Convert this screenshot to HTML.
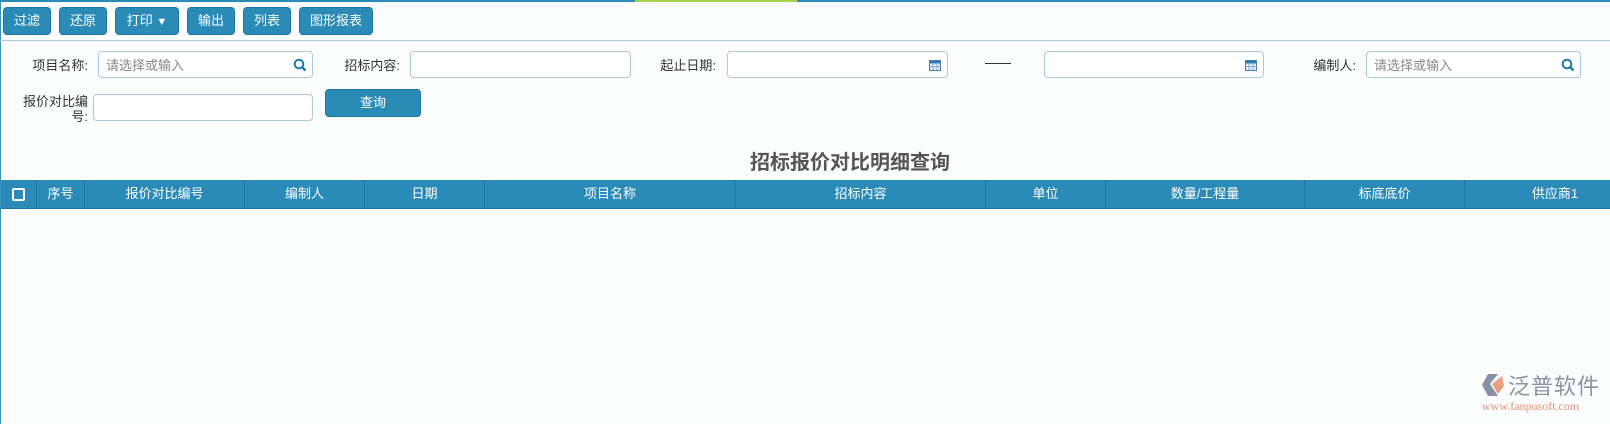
<!DOCTYPE html>
<html><head><meta charset="utf-8"><style>
*{box-sizing:border-box;margin:0;padding:0}
body{width:1610px;height:424px;background:#fbfdfd;font-family:"Liberation Sans","Noto Sans CJK SC",sans-serif;font-size:13px;color:#333;position:relative;overflow:hidden}
.a{position:absolute}
.btn{position:absolute;top:7px;height:28px;background:#2b8bb7;color:#fff;border-radius:4px;font-size:13px;text-align:center;line-height:26px;border:1px solid #1f75a0}
.lbl{position:absolute;font-size:13px;color:#333;text-align:right}
.inp{position:absolute;height:27px;border:1px solid #a8c8e4;border-radius:4px;background:#fff}
.ph{position:absolute;left:7px;top:3px;color:#888;font-size:13px}
.th{position:absolute;top:0;height:28px;line-height:27px;color:#fff;font-size:13px;text-align:center;border-right:1px solid #1f76a3}
</style></head><body>
<div class="a" style="left:0;top:0;width:1610px;height:2px;background:#2a8ab8"></div>
<div class="a" style="left:635px;top:0;width:162px;height:2px;background:#a8d34a"></div>
<div class="a" style="left:0;top:0;width:1px;height:424px;background:#3b92bf"></div>
<div class="btn" style="left:3px;width:48px">过滤</div>
<div class="btn" style="left:59px;width:48px">还原</div>
<div class="btn" style="left:115px;width:64px">打印 <span style="font-size:11px">▼</span></div>
<div class="btn" style="left:187px;width:48px">输出</div>
<div class="btn" style="left:243px;width:48px">列表</div>
<div class="btn" style="left:299px;width:74px">图形报表</div>
<div class="a" style="left:0;top:40px;width:1610px;height:1px;background:#a9cce3"></div>

<div class="lbl" style="left:18px;top:55px;width:70px">项目名称:</div>
<div class="inp" style="left:98px;top:51px;width:215px"><span class="ph">请选择或输入</span>
<svg class="a" style="right:5px;top:6px" width="14" height="14" viewBox="0 0 14 14"><circle cx="6" cy="6" r="4.3" fill="none" stroke="#1d7ab0" stroke-width="2"/><line x1="9" y1="9" x2="12.5" y2="12.5" stroke="#1d7ab0" stroke-width="2.4"/></svg></div>
<div class="lbl" style="left:328px;top:55px;width:72px">招标内容:</div>
<div class="inp" style="left:410px;top:51px;width:221px"></div>
<div class="lbl" style="left:646px;top:55px;width:70px">起止日期:</div>
<div class="inp" style="left:727px;top:51px;width:221px">
<svg class="a" style="right:6px;top:7px" width="12" height="12" viewBox="0 0 12 12"><rect x="0.5" y="1.5" width="11" height="10" fill="#dfe9f3" stroke="#4d80b0"/><rect x="0.5" y="1.5" width="11" height="3" fill="#2f78b6"/><path d="M4 5v6M8 5v6M1 7.5h10" stroke="#7aa0c6" stroke-width="0.8"/></svg></div>
<div class="a" style="left:985px;top:63px;width:26px;height:1px;background:#333"></div>
<div class="inp" style="left:1044px;top:51px;width:220px">
<svg class="a" style="right:6px;top:7px" width="12" height="12" viewBox="0 0 12 12"><rect x="0.5" y="1.5" width="11" height="10" fill="#dfe9f3" stroke="#4d80b0"/><rect x="0.5" y="1.5" width="11" height="3" fill="#2f78b6"/><path d="M4 5v6M8 5v6M1 7.5h10" stroke="#7aa0c6" stroke-width="0.8"/></svg></div>
<div class="lbl" style="left:1298px;top:55px;width:58px">编制人:</div>
<div class="inp" style="left:1366px;top:51px;width:215px"><span class="ph">请选择或输入</span>
<svg class="a" style="right:5px;top:6px" width="14" height="14" viewBox="0 0 14 14"><circle cx="6" cy="6" r="4.3" fill="none" stroke="#1d7ab0" stroke-width="2"/><line x1="9" y1="9" x2="12.5" y2="12.5" stroke="#1d7ab0" stroke-width="2.4"/></svg></div>

<div class="lbl" style="left:18px;top:94px;width:70px;line-height:15px">报价对比编<br>号:</div>
<div class="inp" style="left:93px;top:94px;width:220px"></div>
<div class="btn" style="left:325px;top:89px;width:96px;height:28px;font-size:13px">查询</div>

<div class="a" style="left:0;top:146px;width:1700px;text-align:center;font-size:20px;font-weight:bold;color:#555">招标报价对比明细查询</div>

<div class="a" style="left:1px;top:180px;width:1609px;height:29px;background:#2a8ab8;border-bottom:1px solid #1f76a3">
<div class="th" style="left:0;width:36px"><span style="display:inline-block;width:13px;height:13px;border:2px solid #fff;border-radius:2px;margin-top:8px"></span></div>
<div class="th" style="left:36px;width:48px">序号</div>
<div class="th" style="left:84px;width:160px">报价对比编号</div>
<div class="th" style="left:244px;width:120px">编制人</div>
<div class="th" style="left:364px;width:120px">日期</div>
<div class="th" style="left:484px;width:251px">项目名称</div>
<div class="th" style="left:735px;width:250px">招标内容</div>
<div class="th" style="left:985px;width:120px">单位</div>
<div class="th" style="left:1105px;width:199px">数量/工程量</div>
<div class="th" style="left:1304px;width:160px">标底底价</div>
<div class="th" style="left:1464px;width:180px;border:none">供应商1</div>
</div>

<svg class="a" style="left:1480px;top:372px" width="26" height="26" viewBox="0 0 26 26"><path d="M8 2h10l-8 10 8 12H8L2 13z" fill="#8591a6"/><path d="M12 12l10-8 2 10-6 8z" fill="#e7a081"/></svg>
<div class="a" style="left:1508px;top:369px;font-size:22px;color:#8a93a4;letter-spacing:1px">泛普软件</div>
<div class="a" style="left:1482px;top:399px;font-family:'Liberation Serif',serif;font-size:12px;color:#e39173">www.fanpusoft.com</div>
</body></html>
